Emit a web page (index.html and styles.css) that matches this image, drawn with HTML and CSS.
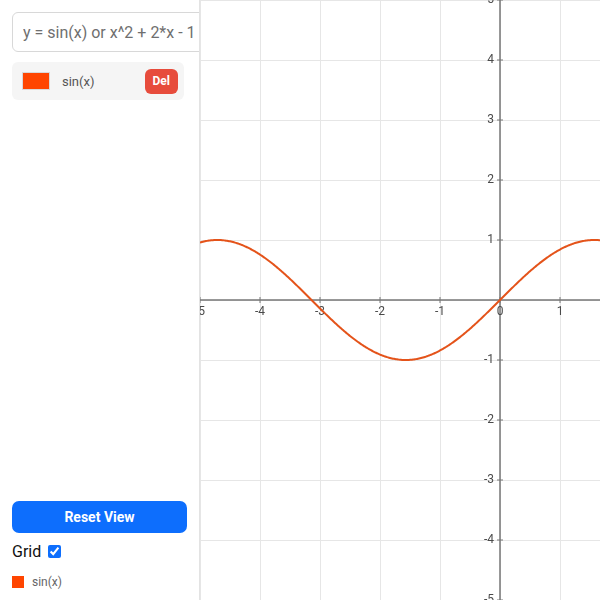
FILE: index.html
```html
<!DOCTYPE html>
<html>

<head>
    <meta name="viewport" content="width=device-width, initial-scale=1">
    <link rel="stylesheet" href="styles.css">
</head>

<body>
    <div class="sidebar">
        <div class="top">
            <input class="expr" type="text" placeholder="y = sin(x) or x^2 + 2*x - 1">
            <div class="fn-row">
                <span class="swatch"></span>
                <span class="fn-name">sin(x)</span>
                <button class="del">Del</button>
            </div>
        </div>
        <div class="bottom">
            <button class="reset">Reset View</button>
            <label class="grid-toggle">Grid <input type="checkbox" checked></label>
            <div class="legend">
                <span class="legend-box"></span>
                <span class="legend-name">sin(x)</span>
            </div>
        </div>
    </div>
    <div class="plot">
        <canvas id="graph" width="400" height="600"></canvas>
    </div>

    <script>
        var cv = document.getElementById("graph");
        var ctx = cv.getContext("2d");
        var W = cv.width, H = cv.height;
        var ox = 300, oy = 300, scale = 60;

        // grid
        ctx.strokeStyle = "#e6e6e6";
        ctx.lineWidth = 1;
        for (var x = ox % scale; x <= W; x += scale) {
            ctx.beginPath();
            ctx.moveTo(x + 0.5, 0);
            ctx.lineTo(x + 0.5, H);
            ctx.stroke();
        }
        for (var y = oy % scale; y <= H; y += scale) {
            ctx.beginPath();
            ctx.moveTo(0, y + 0.5);
            ctx.lineTo(W, y + 0.5);
            ctx.stroke();
        }

        // axes
        ctx.strokeStyle = "#777";
        ctx.lineWidth = 1.5;
        ctx.beginPath();
        ctx.moveTo(0, oy);
        ctx.lineTo(W, oy);
        ctx.moveTo(ox, 0);
        ctx.lineTo(ox, H);
        ctx.stroke();

        // ticks + labels
        ctx.fillStyle = "#4a4a4a";
        ctx.font = "12px Roboto, sans-serif";
        ctx.lineWidth = 1;
        ctx.textAlign = "center";
        ctx.textBaseline = "top";
        for (var i = -5; i <= 1; i++) {
            var px = ox + i * scale;
            ctx.beginPath();
            ctx.moveTo(px, oy - 3);
            ctx.lineTo(px, oy + 3);
            ctx.stroke();
            ctx.fillText(i, px, oy + 6);
        }
        ctx.textAlign = "right";
        ctx.textBaseline = "middle";
        for (var j = -5; j <= 5; j++) {
            if (j == 0) continue;
            var py = oy - j * scale;
            ctx.beginPath();
            ctx.moveTo(ox - 3, py);
            ctx.lineTo(ox + 3, py);
            ctx.stroke();
            ctx.fillText(j, ox - 6, py);
        }

        // curve
        ctx.strokeStyle = "#e4531a";
        ctx.lineWidth = 2;
        ctx.beginPath();
        for (var p = 0; p <= W; p++) {
            var vx = (p - ox) / scale;
            var vy = oy - Math.sin(vx) * scale;
            if (p == 0) ctx.moveTo(p, vy);
            else ctx.lineTo(p, vy);
        }
        ctx.stroke();
    </script>
</body>

</html>
```

FILE: styles.css
```css
body {
    margin: 0;
    height: 600px;
    display: flex;
    font-family: Roboto, "Liberation Sans", sans-serif;
    background: #fff;
}

.sidebar {
    width: 200px;
    box-sizing: border-box;
    padding: 12px 12px 11px;
    border-right: 1px solid #e3e3e3;
    display: flex;
    flex-direction: column;
    justify-content: space-between;
    overflow: hidden;
}

.expr {
    width: 220px;
    height: 40px;
    box-sizing: border-box;
    border: 1px solid #d8d8d8;
    border-radius: 6px;
    padding: 0 10px;
    font-family: inherit;
    font-size: 16px;
    color: #333;
    outline: none;
}

.expr::placeholder {
    color: #6f6f6f;
}

.fn-row {
    margin-top: 10px;
    width: 172px;
    height: 38px;
    box-sizing: border-box;
    padding: 0 6px 0 10px;
    background: #f5f5f5;
    border-radius: 6px;
    display: flex;
    align-items: center;
}

.swatch {
    width: 28px;
    height: 18px;
    background: #ff4500;
    border: 1px solid #d9d9d9;
    box-sizing: border-box;
}

.fn-name {
    margin-left: 12px;
    font-size: 13px;
    color: #555;
    flex: 1;
}

.del {
    background: #e74c3c;
    color: #fff;
    border: none;
    border-radius: 6px;
    font-family: inherit;
    font-weight: bold;
    font-size: 12px;
    height: 25px;
    padding: 0 8px;
}

.bottom {
    display: flex;
    flex-direction: column;
}

.reset {
    height: 32px;
    background: #0d6efd;
    color: #fff;
    border: none;
    border-radius: 7px;
    font-family: inherit;
    font-weight: bold;
    font-size: 14px;
}

.grid-toggle {
    margin-top: 8px;
    height: 20px;
    display: flex;
    align-items: center;
    font-size: 16px;
    color: #111;
}

.grid-toggle input {
    margin: 0 0 0 7px;
    width: 13px;
    height: 13px;
    accent-color: #0d6efd;
}

.legend {
    margin-top: 14px;
    height: 14px;
    display: flex;
    align-items: center;
}

.legend-box {
    width: 12px;
    height: 12px;
    background: #ff4500;
}

.legend-name {
    margin-left: 8px;
    font-size: 12px;
    color: #666;
}

.plot {
    flex: 1;
}

#graph {
    display: block;
}
```
